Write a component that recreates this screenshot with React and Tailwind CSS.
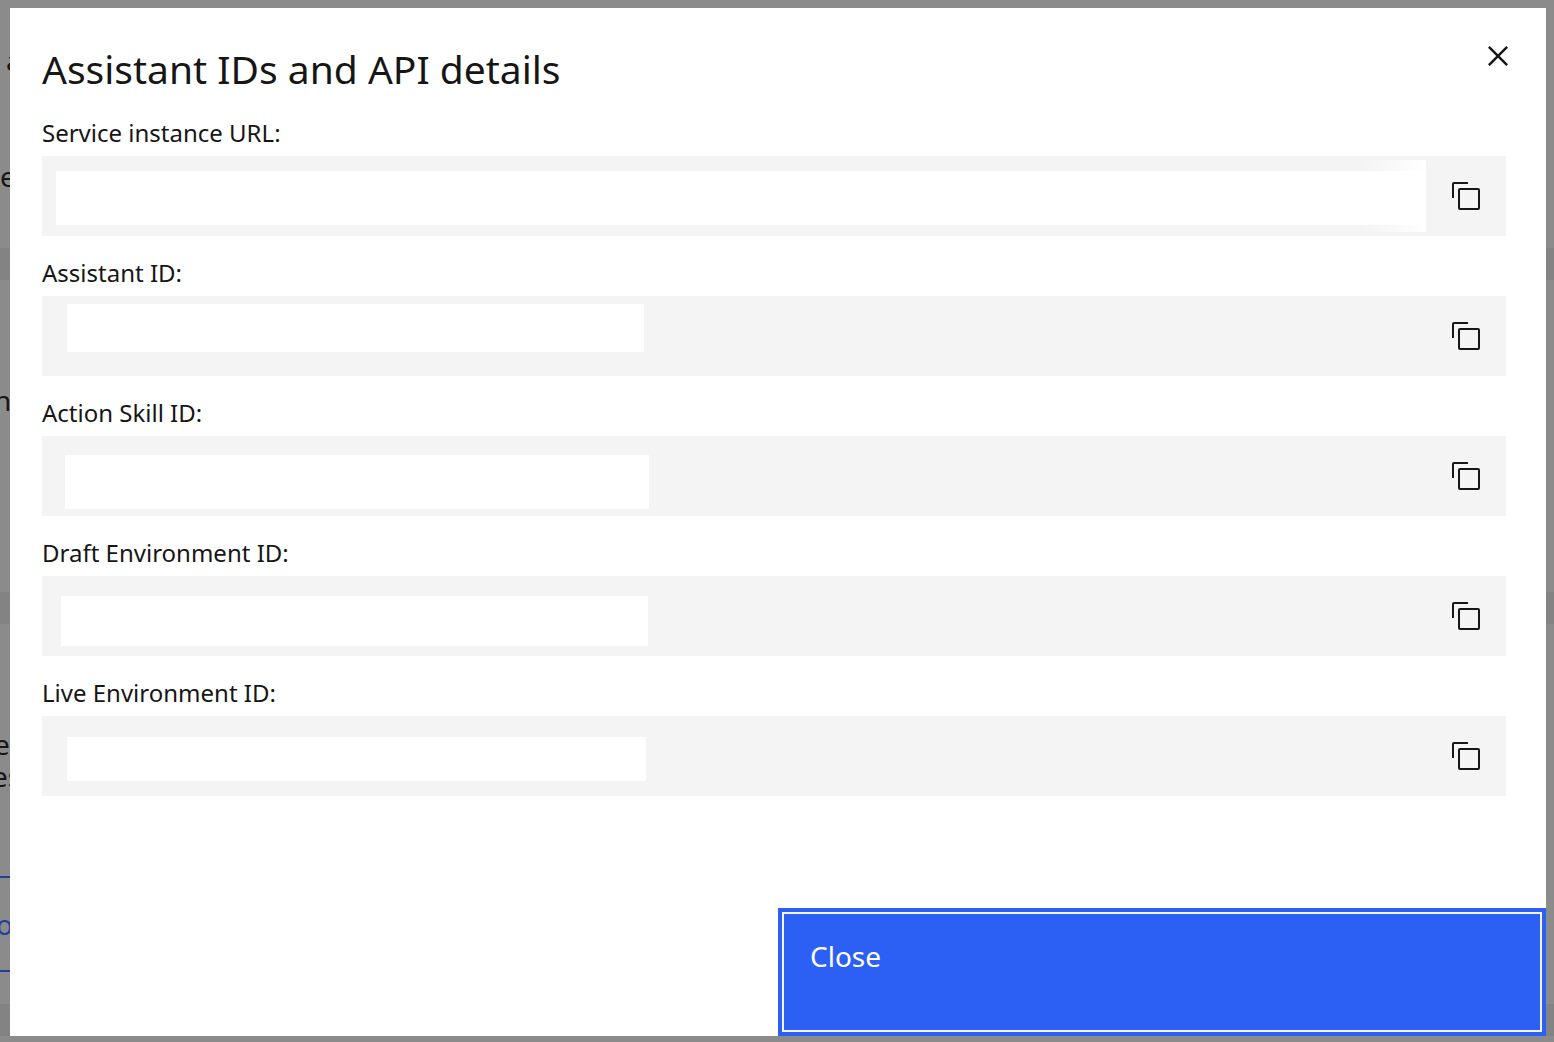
import React from "react";

const fields = [
  { id: "service-url", label: "Service instance URL:", mask: "ml-[14px] mt-[15px] h-[54px] flex-1", wide: true },
  { id: "assistant-id", label: "Assistant ID:", mask: "ml-[25px] mt-2 h-12 w-[577px]" },
  { id: "action-skill-id", label: "Action Skill ID:", mask: "ml-[23px] mt-[19px] h-[54px] w-[584px]" },
  { id: "draft-environment-id", label: "Draft Environment ID:", mask: "ml-[19px] mt-5 h-[50px] w-[587px]" },
  { id: "live-environment-id", label: "Live Environment ID:", mask: "ml-[25px] mt-[21px] h-11 w-[579px]" },
];

function CopyIcon() {
  return (
    <svg viewBox="0 0 32 32" className="size-8" fill="#161616" aria-hidden="true">
      <path d="M28 10v18H10V10h18m0-2H10a2 2 0 0 0-2 2v18a2 2 0 0 0 2 2h18a2 2 0 0 0 2-2V10a2 2 0 0 0-2-2Z" />
      <path d="M4 18H2V4a2 2 0 0 1 2-2h14v2H4Z" />
    </svg>
  );
}

function CloseIcon() {
  return (
    <svg viewBox="0 0 32 32" className="size-10" fill="#161616" aria-hidden="true">
      <path d="M24 9.4 22.6 8 16 14.6 9.4 8 8 9.4l6.6 6.6L8 22.6 9.4 24l6.6-6.6 6.6 6.6 1.4-1.4-6.6-6.6L24 9.4z" />
    </svg>
  );
}

function Field({ id, label, mask, wide }) {
  return (
    <div>
      <label htmlFor={id} className="block pb-1.5 text-2xl leading-[34px]">
        {label}
      </label>
      <div className="flex h-20 bg-[#f4f4f4]">
        <div className="relative flex min-w-0 flex-1 items-start">
          {wide && (
            <div className="absolute top-1 right-0 h-[72px] w-16 bg-linear-to-r from-white/0 to-white" />
          )}
          <input id={id} readOnly className={`relative min-w-0 bg-white outline-none ${mask}`} />
        </div>
        <button type="button" aria-label={`Copy ${label}`} className="flex w-20 items-center justify-center">
          <CopyIcon />
        </button>
      </div>
    </div>
  );
}

function Backdrop() {
  return (
    <div aria-hidden="true" className="absolute inset-0 flex flex-col overflow-hidden bg-[#8b8b8b] text-[28px] leading-8 text-[#161616]">
      <div className="h-[248px] pt-11">
        <p className="pl-1.5">a</p>
        <p className="pt-[84px]">e</p>
      </div>
      <div className="h-8 bg-[#838383]" />
      <div className="h-[312px] pt-[104px]">
        <p className="-ml-1.5">n</p>
      </div>
      <div className="h-8 bg-[#838383]" />
      <div className="h-[380px] pt-[104px]">
        <p className="-ml-1.5">e</p>
        <p className="-ml-2">es</p>
        <div className="mt-[84px] flex h-24 w-1/2 items-center border-y-2 border-[#20409a] text-[#20409a]">
          <span className="-ml-1">o</span>
        </div>
      </div>
      <div className="h-8 bg-[#838383]" />
    </div>
  );
}

export default function App() {
  return (
    <main className="relative flex min-h-screen pt-2 pr-2 pb-1.5 pl-2.5 font-['Noto_Sans',sans-serif] text-[#161616]">
      <Backdrop />
      <section role="dialog" aria-modal="true" aria-labelledby="dialog-title" className="relative flex flex-1 flex-col bg-white">
        <header className="flex items-start justify-between pt-7 pr-7 pl-8">
          <h1 id="dialog-title" className="pt-1.5 text-[39px] leading-[54px]">
            Assistant IDs and API details
          </h1>
          <button type="button" aria-label="Close dialog">
            <CloseIcon />
          </button>
        </header>
        <div className="flex flex-1 flex-col gap-5 pt-5 pr-10 pl-8">
          {fields.map((field) => (
            <Field key={field.id} {...field} />
          ))}
        </div>
        <footer className="flex justify-end">
          <button type="button" className="flex h-32 w-1/2 border-4 border-[#2c60f5] bg-[#2c60f5] text-left text-[28px] leading-9 text-white">
            <span className="h-full w-full border-2 border-[#f4f4f4] px-[26px] pt-6">Close</span>
          </button>
        </footer>
      </section>
    </main>
  );
}
